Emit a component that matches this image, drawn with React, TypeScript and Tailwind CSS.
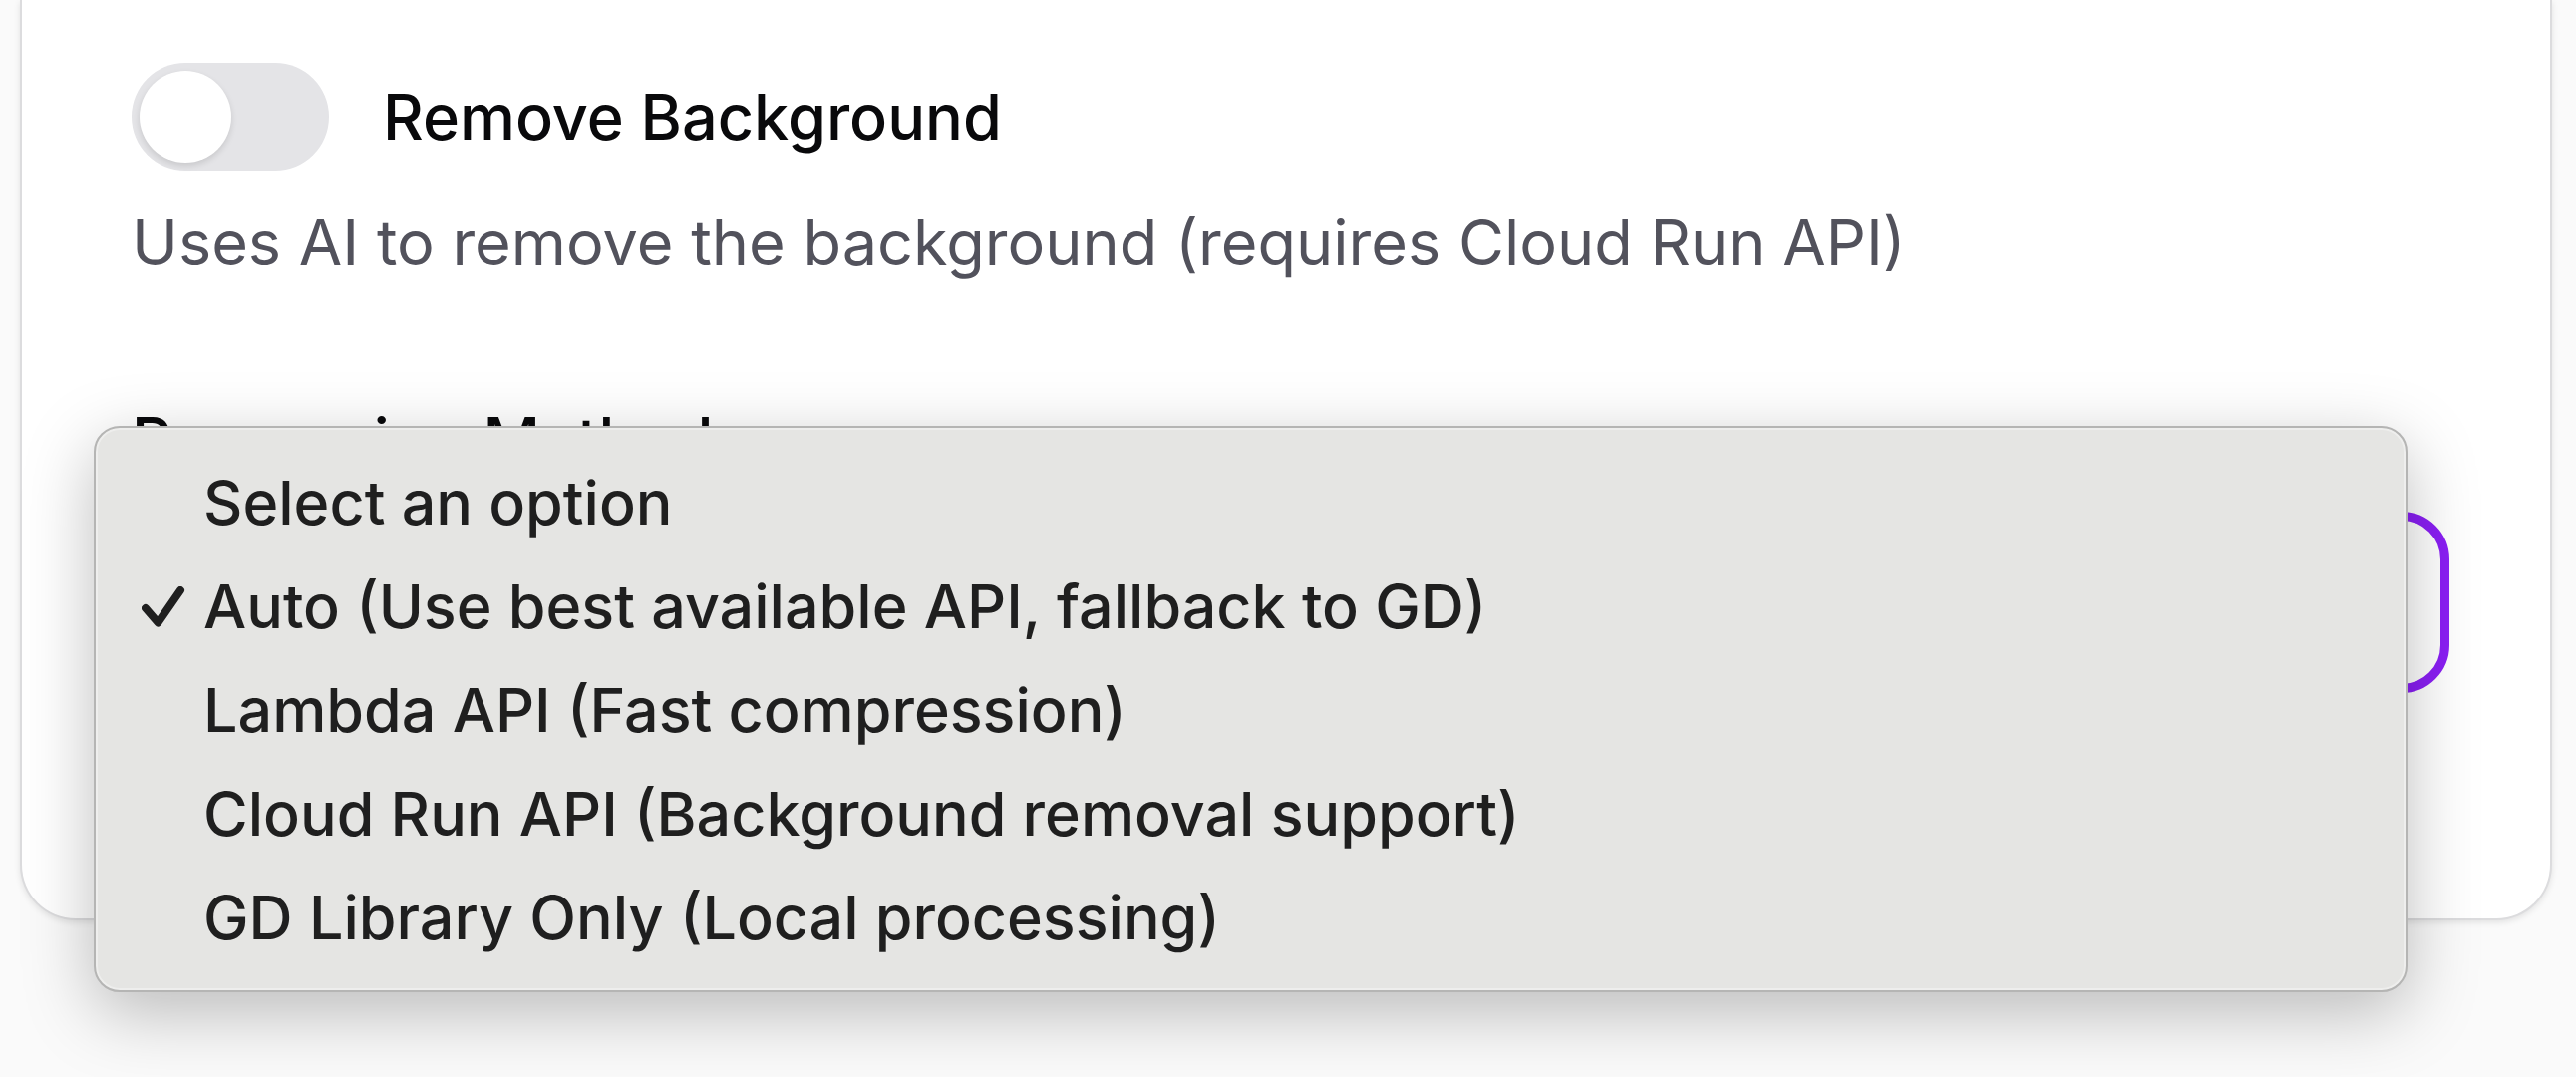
const options = [
  'Select an option',
  'Auto (Use best available API, fallback to GD)',
  'Lambda API (Fast compression)',
  'Cloud Run API (Background removal support)',
  'GD Library Only (Local processing)',
];

const selected = 1;

function CheckMark() {
  return (
    <svg viewBox="0 0 44 42" className="ml-[46px] h-[42px] w-[44px]" fill="none" stroke="currentColor" strokeWidth="8" strokeLinecap="round" strokeLinejoin="round" aria-hidden="true">
      <path d="M4 22 L16.5 36.5 L39 4" />
    </svg>
  );
}

export default function App() {
  return (
    <main className="min-h-screen overflow-hidden bg-[#fafafa] pr-6 pl-5 font-['Inter',sans-serif]">
      <section className="rounded-b-[56px] border-2 border-t-0 border-[#dcdcde] bg-white pt-[63px] pr-[101px] pb-[226px] pl-[110px] shadow-[0_2px_6px_rgba(0,0,0,0.1)]">
        <div className="flex items-center gap-[54px]">
          <input
            id="remove-bg"
            type="checkbox"
            role="switch"
            className="flex h-[108px] w-[198px] appearance-none items-center rounded-full bg-[#e4e4e7] px-2 before:size-[92px] before:rounded-full before:bg-white before:shadow-[0_3px_6px_rgba(0,0,0,0.12)] before:content-['']"
          />
          <label htmlFor="remove-bg" className="text-[63px] leading-[96px] font-medium text-[#09090b]">
            Remove Background
          </label>
        </div>
        <p className="mt-6 text-[63px] leading-[96px] text-[#52525c]">Uses AI to remove the background (requires Cloud Run API)</p>
        <div className="relative mt-[102px]">
          <label htmlFor="method" className="block text-[63px] leading-[96px] font-medium text-[#09090b]">
            Processing Method
          </label>
          <select id="method" defaultValue={selected} className="mt-6 block h-[182px] w-full appearance-none rounded-[48px] border-[9px] border-[#8b1ff5] bg-white px-12 text-[61px] outline-none">
            {options.map((text, i) => (
              <option key={text} value={i}>{text}</option>
            ))}
          </select>
          <ul
            role="listbox"
            aria-label="Processing Method"
            className="absolute top-[34px] right-[42px] -left-[38px] rounded-[26px] border-2 border-[#b5b5b4] bg-[#e5e5e3] pt-6 pb-5 shadow-[inset_0_0_0_2px_rgba(255,255,255,0.35),0_20px_70px_rgba(0,0,0,0.26)]"
          >
            {options.map((text, i) => (
              <li key={text} role="option" aria-selected={i === selected} className="flex h-[104px] items-center text-[61px] font-[450] whitespace-nowrap text-[#1f1f1f]">
                <span className="w-[108px] shrink-0">{i === selected && <CheckMark />}</span>
                {text}
              </li>
            ))}
          </ul>
        </div>
      </section>
    </main>
  );
}
